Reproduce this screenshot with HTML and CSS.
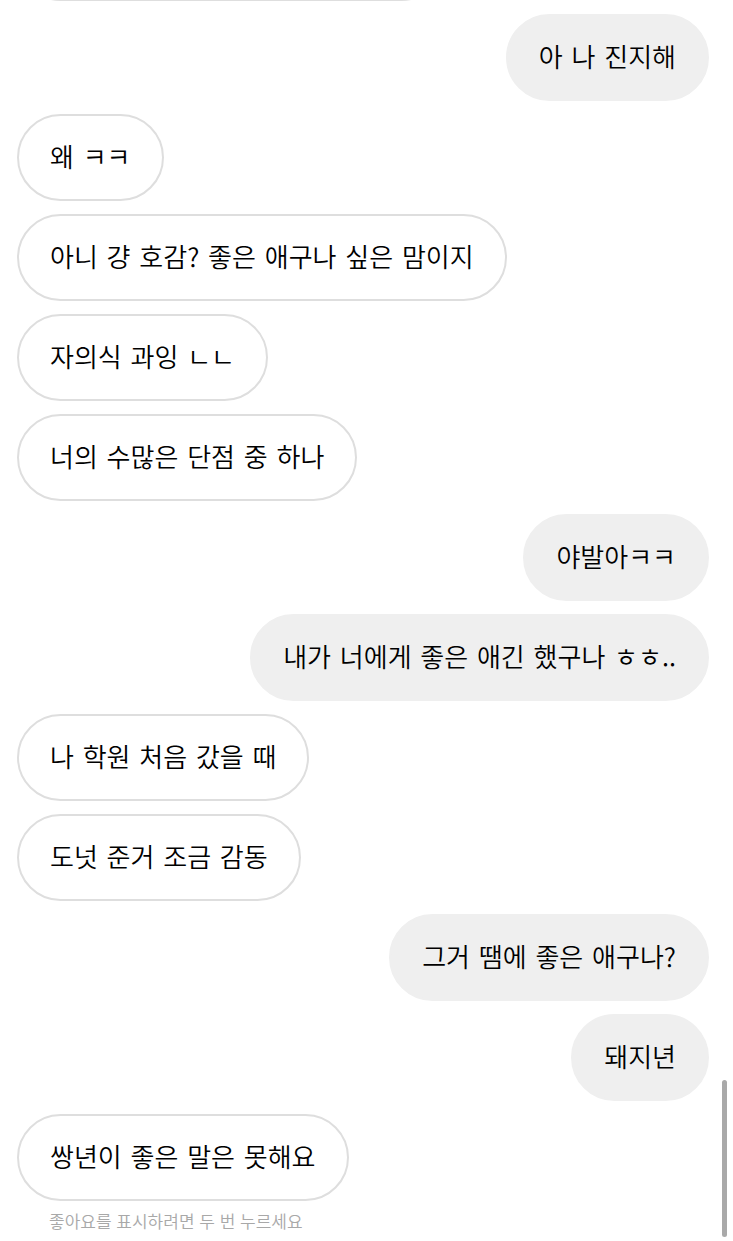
FILE: index.html
```html
<!DOCTYPE html>
<html lang="ko">
<head>
<meta charset="utf-8">
<link rel="stylesheet" href="styles.css">
</head>
<body>
<div class="screen">
  <div class="thread">
    <div class="row in"><div class="bubble partial"></div></div>
    <div class="row out"><div class="bubble">아 나 진지해</div></div>
    <div class="row in"><div class="bubble">왜 ㅋㅋ</div></div>
    <div class="row in"><div class="bubble">아니 걍 호감? 좋은 애구나 싶은 맘이지</div></div>
    <div class="row in"><div class="bubble">자의식 과잉 ㄴㄴ</div></div>
    <div class="row in"><div class="bubble">너의 수많은 단점 중 하나</div></div>
    <div class="row out"><div class="bubble">야발아ㅋㅋ</div></div>
    <div class="row out"><div class="bubble">내가 너에게 좋은 애긴 했구나 ㅎㅎ..</div></div>
    <div class="row in"><div class="bubble">나 학원 처음 갔을 때</div></div>
    <div class="row in"><div class="bubble">도넛 준거 조금 감동</div></div>
    <div class="row out"><div class="bubble">그거 땜에 좋은 애구나?</div></div>
    <div class="row out"><div class="bubble">돼지년</div></div>
    <div class="row in"><div class="bubble">쌍년이 좋은 말은 못해요</div></div>
  </div>
  <div class="hint">좋아요를 표시하려면 두 번 누르세요</div>
</div>
<div class="scrollbar"></div>
</body>
</html>
```

FILE: styles.css
```css
html, body {
  margin: 0;
  padding: 0;
  background: #ffffff;
}
body {
  width: 733px;
  height: 1241px;
  overflow: hidden;
  position: relative;
  font-family: "Noto Sans CJK KR", "Noto Sans", "Liberation Sans", sans-serif;
  color: #000000;
}
.screen {
  height: 1241px;
  box-sizing: border-box;
  display: flex;
  flex-direction: column;
  justify-content: flex-end;
  padding: 0 24px 10px 17px;
  overflow: hidden;
}
.thread {
  display: flex;
  flex-direction: column;
  gap: 13px;
}
.row {
  display: flex;
}
.row.in { justify-content: flex-start; }
.row.out { justify-content: flex-end; }
.bubble {
  box-sizing: border-box;
  height: 87px;
  display: flex;
  align-items: center;
  padding: 0 31px 4px;
  border-radius: 44px;
  font-size: 26px;
  font-weight: 350;
  word-spacing: 1.5px;
  line-height: 35px;
  white-space: nowrap;
}
.bubble.partial {
  width: 428px;
}
.row.in .bubble {
  background: #ffffff;
  border: 2px solid #dedede;
}
.row.out .bubble {
  background: #efefef;
  border: 2px solid #efefef;
}
.hint {
  margin-top: 10px;
  padding-left: 32px;
  font-size: 17px;
  font-weight: 350;
  line-height: 20px;
  color: #a8a8a8;
}
.scrollbar {
  position: absolute;
  right: 6px;
  top: 1080px;
  width: 5px;
  height: 157px;
  border-radius: 3px;
  background: #a9a9a9;
}
```
